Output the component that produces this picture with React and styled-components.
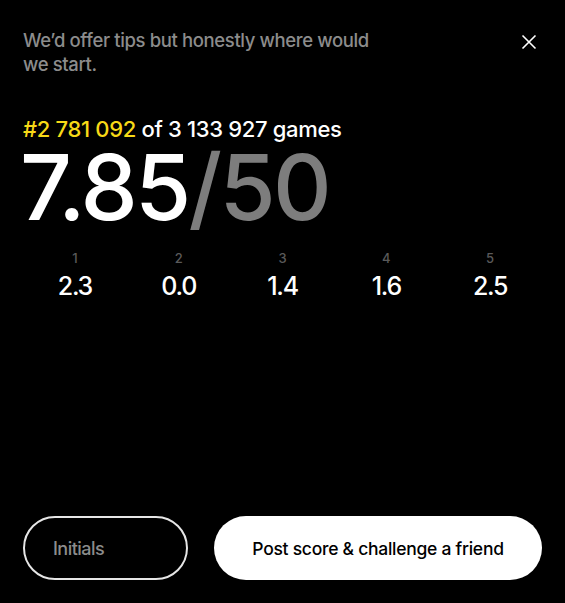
import React from 'react'
import styled, { createGlobalStyle } from 'styled-components'

const GlobalStyle = createGlobalStyle`
  html, body, #root {
    margin: 0;
    height: 100%;
    background: #000;
  }
  body {
    font-family: Inter, "Liberation Sans", sans-serif;
    font-weight: 500;
    color: #fff;
  }
  * { box-sizing: border-box; }
`

const Panel = styled.div`
  height: 100%;
  display: flex;
  flex-direction: column;
  padding: 28px 23px 23px 23px;
`

const Header = styled.div`
  display: flex;
  justify-content: space-between;
  align-items: flex-start;
`

const Tip = styled.p`
  margin: 0;
  max-width: 372px;
  font-size: 18.5px;
  line-height: 24px;
  letter-spacing: -0.02em;
  color: #8c8c8c;
`

const CloseButton = styled.button`
  background: none;
  border: none;
  padding: 0;
  margin: 6px 5px 0 0;
  width: 16px;
  height: 16px;
  cursor: pointer;
  display: flex;
`

const Rank = styled.div`
  margin-top: 41px;
  font-size: 22px;
  line-height: 24px;
  letter-spacing: -0.015em;
  color: #fff;
`

const Yellow = styled.span`
  color: #f7d917;
`

const BigScore = styled.div`
  font-size: 91px;
  line-height: 92px;
  letter-spacing: -0.03em;
  margin-left: -3px;
  color: #fff;
`

const Max = styled.span`
  color: #7d7d7d;
`

const Rounds = styled.div`
  display: grid;
  grid-template-columns: repeat(5, 1fr);
  margin-top: 17px;
`

const Round = styled.div`
  display: flex;
  flex-direction: column;
  align-items: center;
  gap: 5px;
`

const RoundLabel = styled.span`
  font-size: 13px;
  line-height: 16px;
  color: #5a5a5a;
`

const RoundValue = styled.span`
  font-size: 25px;
  line-height: 30px;
  letter-spacing: -0.05em;
  color: #fff;
`

const Footer = styled.div`
  margin-top: auto;
  display: flex;
  gap: 26px;
`

const InitialsInput = styled.input`
  width: 165px;
  height: 64px;
  border: 2px solid #e6e6e6;
  border-radius: 32px;
  background: #000;
  color: #fff;
  padding: 0 0 0 28px;
  font-family: inherit;
  font-weight: 500;
  font-size: 18px;
  letter-spacing: -0.03em;
  outline: none;
  &::placeholder { color: #8c8c8c; }
`

const PostButton = styled.button`
  flex: 1;
  height: 64px;
  border: none;
  border-radius: 32px;
  background: #fff;
  color: #000;
  font-family: inherit;
  font-weight: 500;
  font-size: 17.5px;
  letter-spacing: -0.015em;
  cursor: pointer;
`

const rounds = [2.3, 0.0, 1.4, 1.6, 2.5]

export default function App() {
  return (
    <Panel>
      <GlobalStyle />
      <Header>
        <Tip>We’d offer tips but honestly where would we start.</Tip>
        <CloseButton aria-label="Close">
          <svg width="16" height="16" viewBox="0 0 16 16" fill="none" stroke="#fff" strokeWidth="1.6">
            <path d="M1.5 1.5 L14.5 14.5 M14.5 1.5 L1.5 14.5" />
          </svg>
        </CloseButton>
      </Header>
      <Rank><Yellow>#2 781 092</Yellow> of 3 133 927 games</Rank>
      <BigScore>7.85<Max>/50</Max></BigScore>
      <Rounds>
        {rounds.map((r, i) => (
          <Round key={i}>
            <RoundLabel>{i + 1}</RoundLabel>
            <RoundValue>{r.toFixed(1)}</RoundValue>
          </Round>
        ))}
      </Rounds>
      <Footer>
        <InitialsInput placeholder="Initials" />
        <PostButton>Post score &amp; challenge a friend</PostButton>
      </Footer>
    </Panel>
  )
}
